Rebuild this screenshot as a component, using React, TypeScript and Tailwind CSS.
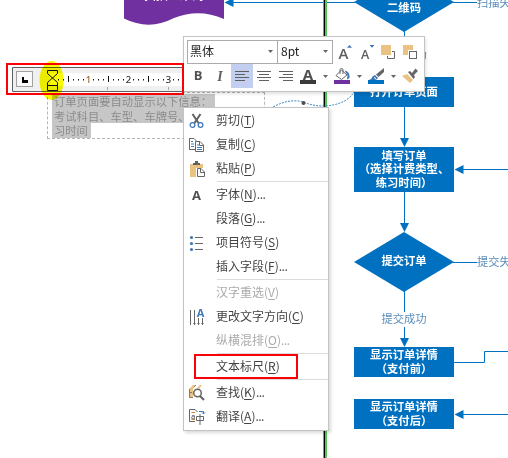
import type { ReactNode } from "react";

const CJK = "font-['Noto_Sans_CJK_SC',sans-serif]";

function Node({ className, lines }: { className: string; lines: string[] }) {
  return (
    <div
      className={`absolute left-[354px] flex w-[100px] flex-col items-center justify-center bg-[#0070c0] pb-[1px] text-[11.3px] font-bold leading-[13.3px] text-white ${className}`}
    >
      {lines.map((l) => (
        <span key={l} className="whitespace-nowrap">{l}</span>
      ))}
    </div>
  );
}

function Diagram() {
  return (
    <>
      <svg className="absolute left-0 top-0" width="508" height="458" viewBox="0 0 508 458">
        <path d="M124 0H224V19Q199 8 174 18Q149 31 124 18.500Z" fill="#7030a0" />
        <g fill="none" stroke="#0070c0" strokeWidth="1">
          <path d="M232 2.5H355M453 2.5H477M404.500 31V78M404.500 107V140M463 169.500H508M404.500 192V225M453 262.500H477M404.500 291V312M404.500 327V340M454 362.500H484.500V351.500H508M463 414.500H508" />
        </g>
        <g fill="#0070c0">
          <path d="M354 2L404 -28L454 2L404 32Z" />
          <path d="M354 262L404 232L454 262L404 292Z" />
          <path d="M224.500 2.500L233.500 -2V7Z" />
          <path d="M404.500 147L400 138H409Z" />
          <path d="M404.500 232L400 223H409Z" />
          <path d="M404.500 347L400 338H409Z" />
          <path d="M454.500 169.500L463.500 165V174Z" />
          <path d="M454.500 414.500L463.500 410V419Z" />
        </g>
        <rect x="323" width="1" height="458" fill="#909090" />
        <rect x="324" width="1" height="458" fill="#000" />
        <rect x="325" width="2" height="458" fill="#53c653" />
        <path d="M273 107Q290 98 303 102Q318 108 333 105T354 92" fill="none" stroke="#2f83c5" strokeWidth="1" strokeDasharray="2 1.200" />
        <circle cx="303.500" cy="103" r="2" fill="#505050" />
      </svg>
      <div className="absolute left-[124px] top-[-12px] w-[100px] text-center text-[12px] font-medium leading-[14px] text-white">扫描二维码</div>
      <div className="absolute left-[354px] top-[-1px] w-[100px] text-center text-[11.3px] font-bold leading-[16px] text-white">二维码</div>
      <div className="absolute left-[477px] top-[-6px] whitespace-nowrap text-[11.3px] leading-[16px] text-[#5b8dbb]">扫描失败</div>
      <div className="absolute left-[381.500px] top-[46px] whitespace-nowrap text-[11.3px] leading-[16px] text-[#5b8dbb]">扫描成功</div>
      <Node className="top-[77px] h-[30px]" lines={["打开订单页面"]} />
      <Node className="top-[147px] h-[45px]" lines={["填写订单", "（选择计费类型、", "练习时间）"]} />
      <div className="absolute left-[354px] top-[252px] w-[100px] text-center text-[11.3px] font-bold leading-[16px] text-white">提交订单</div>
      <div className="absolute left-[477px] top-[253px] whitespace-nowrap text-[11.3px] leading-[16px] text-[#5b8dbb]">提交失败</div>
      <div className="absolute left-[354px] top-[310px] w-[100px] text-center text-[11.3px] leading-[16px] text-[#5b8dbb]">提交成功</div>
      <Node className="top-[347px] h-[30px]" lines={["显示订单详情", "（支付前）"]} />
      <Node className="top-[399px] h-[30px]" lines={["显示订单详情", "（支付后）"]} />
    </>
  );
}

function EditedText() {
  return (
    <div className="absolute left-[47px] top-[92px] h-[47px] w-[218px] border border-dashed border-[#b5b5b5] pl-[4px] pt-[1px] text-[11.3px] leading-[14px] text-[#8c8c8c]">
      <div className="flex h-[15px] w-[163px] items-center whitespace-nowrap bg-[#c6c6c6] pb-[1px] pl-[2px]">订单页面要自动显示以下信息：</div>
      <div className="flex h-[14px] w-[154px] items-center whitespace-nowrap bg-[#c6c6c6] pb-[1px] pl-[2px]">考试科目、车型、车牌号、练</div>
      <div className="flex h-[15px] w-[39px] items-center whitespace-nowrap bg-[#c6c6c6] pb-[1px] pl-[2px]">习时间</div>
    </div>
  );
}

function Ruler() {
  const marks = Array.from({ length: 25 }, (_, i) => 58 + i * 5);
  return (
    <svg className="absolute left-0 top-0" width="190" height="105" viewBox="0 0 190 105">
      <rect x="7" y="64" width="175" height="30" fill="#fff" />
      <path d="M183 67.500H12.500V91.500H183" fill="#f0f0f0" stroke="#606060" />
      <rect x="50" y="73" width="133" height="13" fill="#fff" />
      <rect x="16.500" y="71.500" width="16" height="15" fill="#fafafa" stroke="#a0a0a0" />
      <path d="M22 77H24V80H28V83H22Z" fill="#000" />
      <path d="M107.500 87V90M168.500 87V90" stroke="#a8a8a8" />
      {marks.map((x) => {
        if (x === 88 || x === 128 || x === 168)
          return (
            <text key={x} x={x + 0.5} y="83" textAnchor="middle" fontSize="9.500" fontWeight="500" fill={x === 88 ? "#a8652a" : "#303030"} className="font-['Noto_Sans',sans-serif]">
              {(x - 48) / 40}
            </text>
          );
        const major = x === 68 || x === 108 || x === 148;
        return <rect key={x} x={x} y={major ? 76 : 79} width="1" height={major ? 6 : 1.5} fill="#111" />;
      })}
      <rect x="7" y="64" width="176" height="30" fill="none" stroke="#fb0007" strokeWidth="2" />
      <g className="mix-blend-multiply">
        <ellipse cx="51.500" cy="80.500" rx="12" ry="19.500" fill="#fafa00" />
      </g>
      <path d="M47.500 70.500H57.500V73.500L47.500 82.500V85.500H57.500V82.500L47.500 73.500ZM47.500 85.500H57.500V90.500H47.500Z" fill="none" stroke="#111" />
    </svg>
  );
}

function Cell({ children, active }: { children: ReactNode; active?: boolean }) {
  return <span className={`flex h-6 w-[22px] shrink-0 items-center justify-center ${active ? "bg-[#c3cff1]" : ""}`}>{children}</span>;
}

function Caret() {
  return (
    <span className="flex w-3 shrink-0 items-center justify-center">
      <svg width="5" height="3" viewBox="0 0 5 3"><path d="M0 0H5L2.500 3Z" fill="#666" /></svg>
    </span>
  );
}

function Icon({ children }: { children: ReactNode }) {
  return <svg width="18" height="18" viewBox="0 0 18 18" fill="none" stroke="#666" className="shrink-0">{children}</svg>;
}

function Align({ d }: { d: string }) {
  return <Icon><path d={d} stroke="#606060" /></Icon>;
}

function MiniToolbar() {
  return (
    <div className="absolute left-[183px] top-[36px] h-[56px] w-[242px] border border-[#c4c4c4] bg-white pt-[3px] shadow-[1px_2px_3px_rgba(0,0,0,0.12)]">
      <div className="flex h-6 items-center pl-[3px]">
        <div className="flex h-6 w-[91px] items-center justify-between border border-[#ababab] pb-[2px] pl-[2px] pr-[1px] text-[12px] text-[#222]">
          黑体<Caret />
        </div>
        <div className="flex h-6 w-[55px] items-center justify-between border border-l-0 border-[#ababab] pb-[2px] pl-[3px] pr-[1px] text-[12px] text-[#222]">
          8pt<Caret />
        </div>
        <Cell>
          <Icon>
            <text x="3.500" y="15.500" fontSize="15" fontWeight="600" fill="#606060" stroke="none" className="font-['Open_Sans',sans-serif]">A</text>
            <path d="M12 4.700L14.500 2L17 4.700Z" fill="#3d78b5" stroke="none" />
          </Icon>
        </Cell>
        <Cell>
          <Icon>
            <text x="4" y="15.500" fontSize="12.500" fontWeight="600" fill="#606060" stroke="none" className="font-['Open_Sans',sans-serif]">A</text>
            <path d="M12.500 2H17.500L15 4.700Z" fill="#3d78b5" stroke="none" />
          </Icon>
        </Cell>
        <Cell>
          <Icon>
            <rect x="2" y="2" width="10" height="10" fill="#eac282" stroke="none" />
            <path d="M13 8.500H15.500V15.500H8.500V13" />
          </Icon>
        </Cell>
        <Cell>
          <Icon>
            <rect x="2" y="2" width="10" height="10" fill="#eac282" stroke="none" />
            <rect x="7" y="7" width="10" height="10" fill="#fff" stroke="none" />
            <rect x="8.500" y="8.500" width="7" height="7" />
          </Icon>
        </Cell>
      </div>
      <div className="flex h-6 items-center pl-[3px]">
        <Cell><span className="font-['Open_Sans',sans-serif] text-[13px] font-bold text-[#505050]">B</span></Cell>
        <Cell><span className="font-['Liberation_Serif',serif] text-[14px] font-bold italic text-[#606060]">I</span></Cell>
        <Cell active><Align d="M2 4.500H16M2 7.500H12M2 10.500H16M2 13.500H12" /></Cell>
        <Cell><Align d="M2 4.500H16M4 7.500H14M2 10.500H16M4 13.500H14" /></Cell>
        <Cell><Align d="M2 4.500H16M6 7.500H16M2 10.500H16M6 13.500H16" /></Cell>
        <Cell>
          <Icon>
            <text x="9" y="13" textAnchor="middle" fontSize="15" fontWeight="700" fill="#505050" stroke="none" className="font-['Open_Sans',sans-serif]">A</text>
            <rect x="1" y="13" width="16" height="4" fill="#3b3b3b" stroke="none" />
          </Icon>
        </Cell>
        <Caret />
        <Cell>
          <Icon>
            <path d="M8.500 3L14 8L8.500 12.500L3 8.500Z" fill="#fff" />
            <path d="M7 7V2.500Q7 1.500 8.500 1.500T10 3V7" />
            <path d="M11.500 3.500Q17 4 16.500 11L14 12.500L14.500 8Z" fill="#3d78b5" stroke="none" />
            <rect x="1" y="13" width="16" height="4" fill="#7030a0" stroke="none" />
          </Icon>
        </Cell>
        <Caret />
        <Cell>
          <Icon>
            <path d="M17 1V5L11.500 10L9 7.500Z" fill="#666" stroke="none" />
            <path d="M8 8L11 11Q9 14 2 13Q5 12 5.500 9.500Z" fill="#3d78b5" stroke="none" />
            <path d="M7 10.500L9 11.500" stroke="#fff" />
            <rect x="1" y="13" width="16" height="4" fill="#0070c0" stroke="none" />
          </Icon>
        </Cell>
        <Caret />
        <Cell>
          <Icon>
            <path d="M6 7L12 13L9 16L1 9Z" fill="#eac282" stroke="none" />
            <path d="M7 5L9 4L11 6L14.500 1.500L17 4L13 8L14 10L12.500 12Z" fill="#666" stroke="none" />
          </Icon>
        </Cell>
      </div>
    </div>
  );
}

const cutIcon = (
  <Icon>
    <path d="M4.500 2L10.500 11M12.500 2L6.500 11" stroke="#606060" strokeWidth="2" />
    <circle cx="4.500" cy="13" r="2.400" stroke="#3d78b5" strokeWidth="1.200" />
    <circle cx="12.500" cy="13" r="2.400" stroke="#3d78b5" strokeWidth="1.200" />
  </Icon>
);
const copyIcon = (
  <Icon>
    <path d="M7 13.500H1.500V2.500H6L8.500 5" />
    <path d="M3 5.500H5M3 8H6M3 10.500H6" stroke="#3d78b5" />
    <path d="M7.500 5.500H12L15.500 9V15.500H7.500Z" fill="#fff" />
    <path d="M11.500 5.500V9.500H15.500" />
    <path d="M9 9H11M9 11.500H14M9 13.500H14" stroke="#3d78b5" />
  </Icon>
);
const pasteIcon = (
  <Icon>
    <path d="M2 4H15V8H8V17H2Z" fill="#eac282" stroke="none" />
    <path d="M5 5V3H7V1H10V3H12V5Z" fill="#606060" stroke="none" />
    <path d="M9.500 8.500H13L16.500 12V16.500H9.500Z" fill="#fff" />
    <path d="M12.500 8.500V12.500H16.500" />
  </Icon>
);
const fontIcon = (
  <Icon>
    <text x="8.500" y="13.500" textAnchor="middle" fontSize="13" fontWeight="700" fill="#505050" stroke="none" className="font-['Open_Sans',sans-serif]">A</text>
  </Icon>
);
const bulletIcon = (
  <Icon>
    <path d="M7 3.500H15M7 9.500H15M7 15.500H15" />
    <g fill="#3d78b5" stroke="none">
      <circle cx="3.500" cy="3.500" r="1.600" /><circle cx="3.500" cy="9.500" r="1.600" /><circle cx="3.500" cy="15.500" r="1.600" />
    </g>
  </Icon>
);
const directionIcon = (
  <Icon>
    <path d="M2.500 2V17M6.500 2V17M10.500 10V17M14.500 10V17" />
    <path d="M5 15L6.500 16.500L8 15M9 15L10.500 16.500L12 15M13 15L14.500 16.500L16 15" strokeWidth=".6" />
    <text x="12.500" y="9" textAnchor="middle" fontSize="11" fontWeight="700" fill="#3d78b5" stroke="none" className="font-['Open_Sans',sans-serif]">A</text>
  </Icon>
);
const findIcon = (
  <Icon>
    <path d="M1 5L5 1H8L5 5V14H1ZM9 4L12 1H14L11 5Z" fill="#eac282" stroke="none" />
    <path d="M1.500 5V13.500H5M2 8.500H4M6 3L8 1" stroke="#8a7b68" />
    <circle cx="9.500" cy="9" r="3.800" fill="#fff" strokeWidth="1.500" />
    <path d="M12 12L16 16" strokeWidth="2.200" />
  </Icon>
);
const translateIcon = (
  <Icon>
    <path d="M7 13.500H1.500V1.500H7L9.500 4" />
    <path d="M3.500 4.500H7M3.500 11.500H7" stroke="#c47b3a" />
    <text x="3" y="10.500" fontSize="7.500" fontWeight="600" fill="#606060" stroke="none" className="font-['Open_Sans',sans-serif]">a</text>
    <path d="M8.500 8.500H15.500V12.500H8.500ZM12 6V17" />
    <path d="M11 3.500H15.500V6M14 4.500L15.500 6L17 4.500" stroke="#3d78b5" />
  </Icon>
);

type Item = { label: string; hotkey: string; dots?: boolean; icon?: ReactNode; disabled?: boolean };

const groups: Item[][] = [
  [
    { label: "剪切", hotkey: "T", icon: cutIcon },
    { label: "复制", hotkey: "C", icon: copyIcon },
    { label: "粘贴", hotkey: "P", icon: pasteIcon },
  ],
  [
    { label: "字体", hotkey: "N", dots: true, icon: fontIcon },
    { label: "段落", hotkey: "G", dots: true },
    { label: "项目符号", hotkey: "S", icon: bulletIcon },
    { label: "插入字段", hotkey: "F", dots: true },
  ],
  [
    { label: "汉字重选", hotkey: "V", disabled: true },
    { label: "更改文字方向", hotkey: "C", icon: directionIcon },
    { label: "纵横混排", hotkey: "O", dots: true, disabled: true },
  ],
  [{ label: "文本标尺", hotkey: "R" }],
  [
    { label: "查找", hotkey: "K", dots: true, icon: findIcon },
    { label: "翻译", hotkey: "A", dots: true, icon: translateIcon },
  ],
];

function ContextMenu() {
  return (
    <div className="absolute left-[183px] top-[107px] h-[324px] w-[146px] border border-[#c4c4c4] bg-white pt-[1px] shadow-[2px_2px_3px_rgba(0,0,0,0.15)]">
      {groups.map((items, g) => (
        <div key={g}>
          {g > 0 && <div className="ml-[33px] h-[2px] border-t border-[#dcdcdc]" />}
          {items.map((item) => (
            <div key={item.label} className={`flex h-6 items-center pb-[1px] text-[12px] leading-none ${item.disabled ? "text-[#ababab]" : "text-[#444]"}`}>
              <span className="flex w-[32px] shrink-0 pl-[4px]">{item.icon}</span>
              <span className="whitespace-nowrap pb-[1px]">
                {item.label}(<span className="underline underline-offset-2">{item.hotkey}</span>)
                {item.dots && <span className="tracking-[-0.5px]">...</span>}
              </span>
            </div>
          ))}
        </div>
      ))}
      <div className="absolute left-[10px] top-[246px] h-[25px] w-[104px] border-2 border-[#fb0007]" />
    </div>
  );
}

export default function App() {
  return (
    <div className={`relative h-[458px] w-[508px] overflow-hidden bg-white ${CJK}`}>
      <Diagram />
      <EditedText />
      <MiniToolbar />
      <Ruler />
      <ContextMenu />
    </div>
  );
}
